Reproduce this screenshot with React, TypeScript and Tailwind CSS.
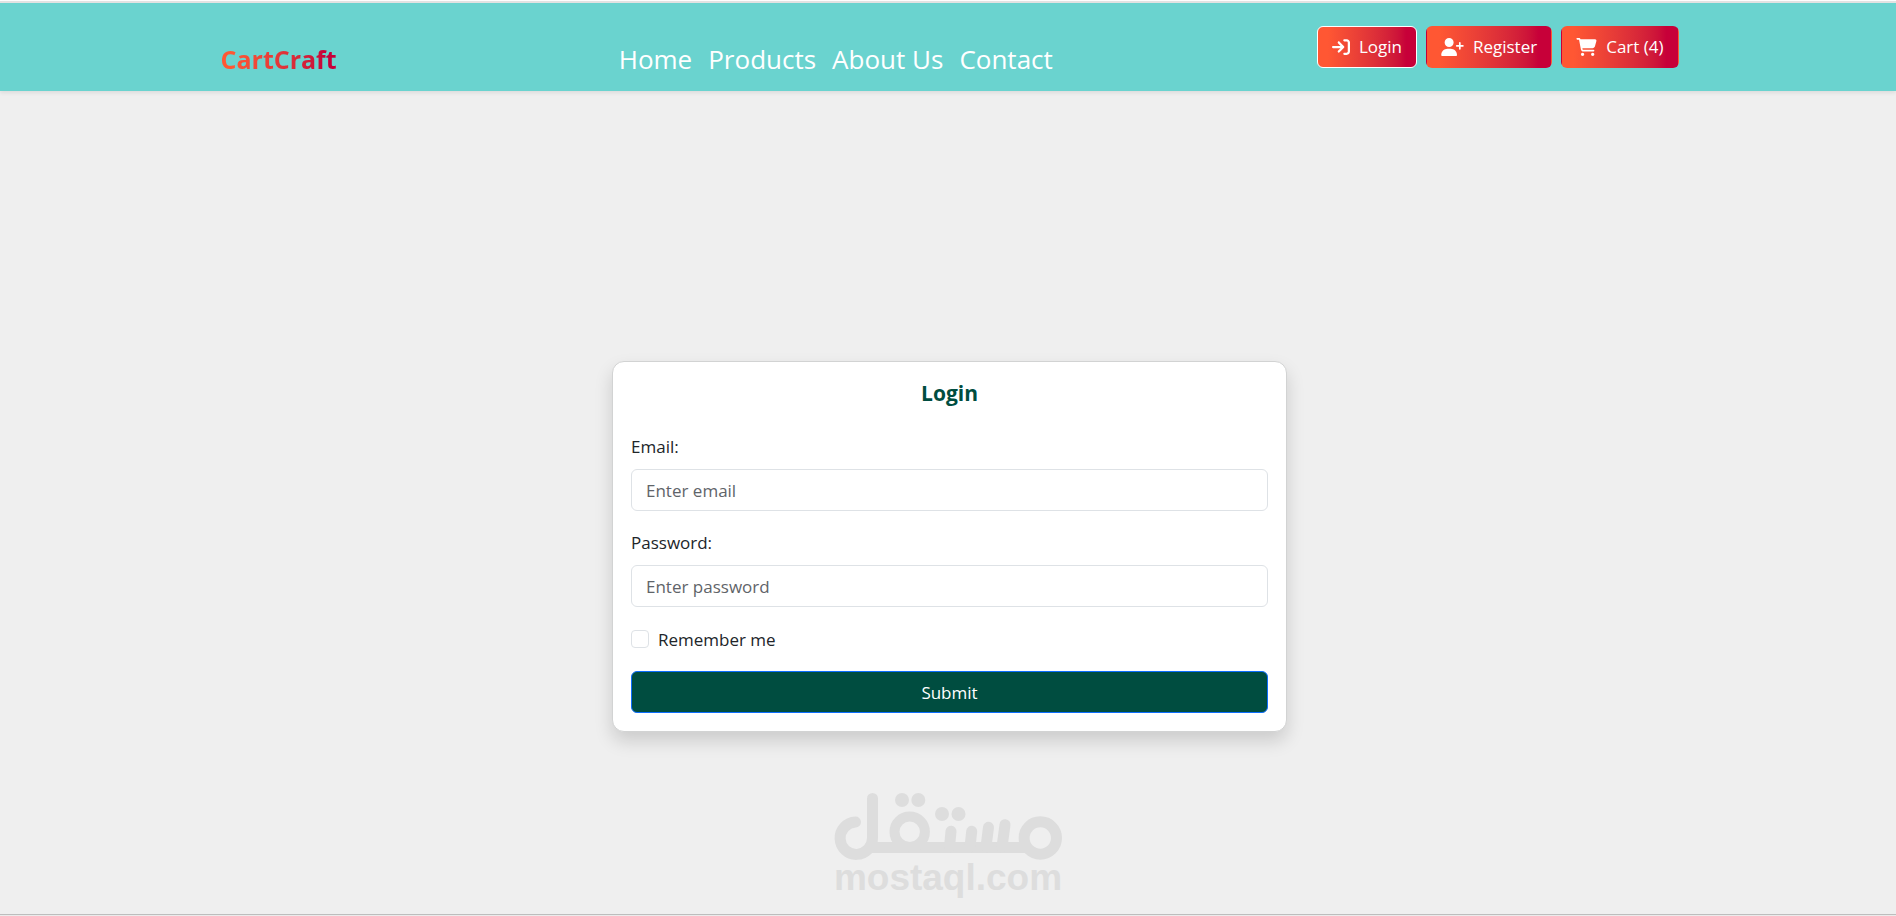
import { FaArrowRightToBracket, FaCartShopping, FaUserPlus } from "react-icons/fa6";

const links = ["Home", "Products", "About Us", "Contact"];

const actionClass =
  "flex h-[42px] items-center gap-[9px] rounded-md border bg-gradient-to-r from-[#ff5733] from-10% to-[#c70039] to-90% px-[14px] text-[17px] text-white";

const fieldClass =
  "h-[42px] w-full rounded-md border border-[#dee2e6] bg-white px-[14px] text-[17px] text-[#212529] placeholder:text-[#5f6469]";

function Header() {
  return (
    <header className="relative z-10 border-t-2 border-[#e2e2e2] shadow-[0_2px_4px_rgba(0,0,0,0.08)]">
      <div className="bg-[#6ad3cf]">
        <div className="mx-auto flex h-[88px] max-w-[1461px] items-start justify-between pl-[3px]">
          <a
            href="#"
            className="mt-9 bg-gradient-to-r from-[#ff5733] from-10% to-[#c70039] to-90% bg-clip-text text-[25px] leading-10 font-bold text-transparent"
          >
            CartCraft
          </a>
          <nav className="mt-9 flex gap-4 pl-[18px] text-[26px] leading-10 text-white">
            {links.map((link) => (
              <a key={link} href="#">
                {link}
              </a>
            ))}
          </nav>
          <div className="mt-[23px] flex gap-[9px]">
            <button type="button" className={`${actionClass} border-white`}>
              <FaArrowRightToBracket className="h-[18px] w-[18px]" />
              Login
            </button>
            <button type="button" className={`${actionClass} border-transparent`}>
              <FaUserPlus className="h-[18px] w-[23px]" />
              Register
            </button>
            <button type="button" className={`${actionClass} border-transparent`}>
              <FaCartShopping className="h-[18px] w-[21px]" />
              Cart (4)
            </button>
          </div>
        </div>
      </div>
    </header>
  );
}

function LoginCard() {
  return (
    <form className="w-full max-w-[675px] rounded-xl border border-[#d2d3d3] bg-white px-[18px] pt-[17px] pb-[18px] text-[17px] leading-[27px] text-[#212529] shadow-[0_9px_18px_rgba(0,0,0,0.15)]">
      <h1 className="mb-[26px] text-center text-[21px] leading-7 font-bold text-[#004d40]">Login</h1>
      <div className="mb-[18px]">
        <label htmlFor="email" className="mb-[9px] block">
          Email:
        </label>
        <input id="email" type="email" placeholder="Enter email" className={fieldClass} />
      </div>
      <div className="mb-[18px]">
        <label htmlFor="password" className="mb-[9px] block">
          Password:
        </label>
        <input id="password" type="password" placeholder="Enter password" className={fieldClass} />
      </div>
      <div className="mb-[18px] flex h-7 items-center gap-[9px]">
        <input
          id="remember"
          type="checkbox"
          className="size-[18px] appearance-none rounded border border-[#dee2e6] bg-white checked:bg-[#004d40]"
        />
        <label htmlFor="remember">Remember me</label>
      </div>
      <button
        type="submit"
        className="block h-[42px] w-full rounded-md border border-[#0d6efd] bg-[#004d40] text-center text-white"
      >
        Submit
      </button>
    </form>
  );
}

function Watermark() {
  return (
    <div className="flex flex-col items-center text-[#dddddd]">
      <svg width="228" height="68" viewBox="0 0 228 68" fill="none" stroke="currentColor" strokeWidth="11" strokeLinecap="round">
        <path d="M21.5 29A16.2 16.2 0 1 0 38.5 45V5.5" />
        <path d="M34 54.5H195" strokeLinecap="butt" />
        <circle cx="75.7" cy="38.7" r="15.2" strokeWidth="10" />
        <path d="M117 38.3L115.5 54M137.7 38.3L136 54M154.5 34.3L152 54M171 31.7L168 54" />
        <circle cx="206.3" cy="45" r="16.2" />
        <g fill="currentColor" stroke="none">
          <circle cx="68" cy="7" r="7" />
          <circle cx="84.3" cy="7" r="7" />
          <circle cx="108" cy="21" r="7" />
          <circle cx="124.5" cy="21" r="7" />
        </g>
      </svg>
      <span className="font-['Liberation_Sans',sans-serif] text-[37px] leading-[34px] font-bold">mostaql.com</span>
    </div>
  );
}

export default function App() {
  return (
    <div className="flex min-h-screen flex-col bg-[#ebebeb] font-['Open_Sans',sans-serif]">
      <div className="h-px bg-white" />
      <Header />
      <main className="mb-px flex grow flex-col items-center border-b border-[#bdbdbd] bg-[#efefef] px-4 pt-[270px] pb-2">
        <div className="flex w-full justify-center pl-[3px]">
          <LoginCard />
        </div>
        <div className="mt-[61px]">
          <Watermark />
        </div>
      </main>
    </div>
  );
}
